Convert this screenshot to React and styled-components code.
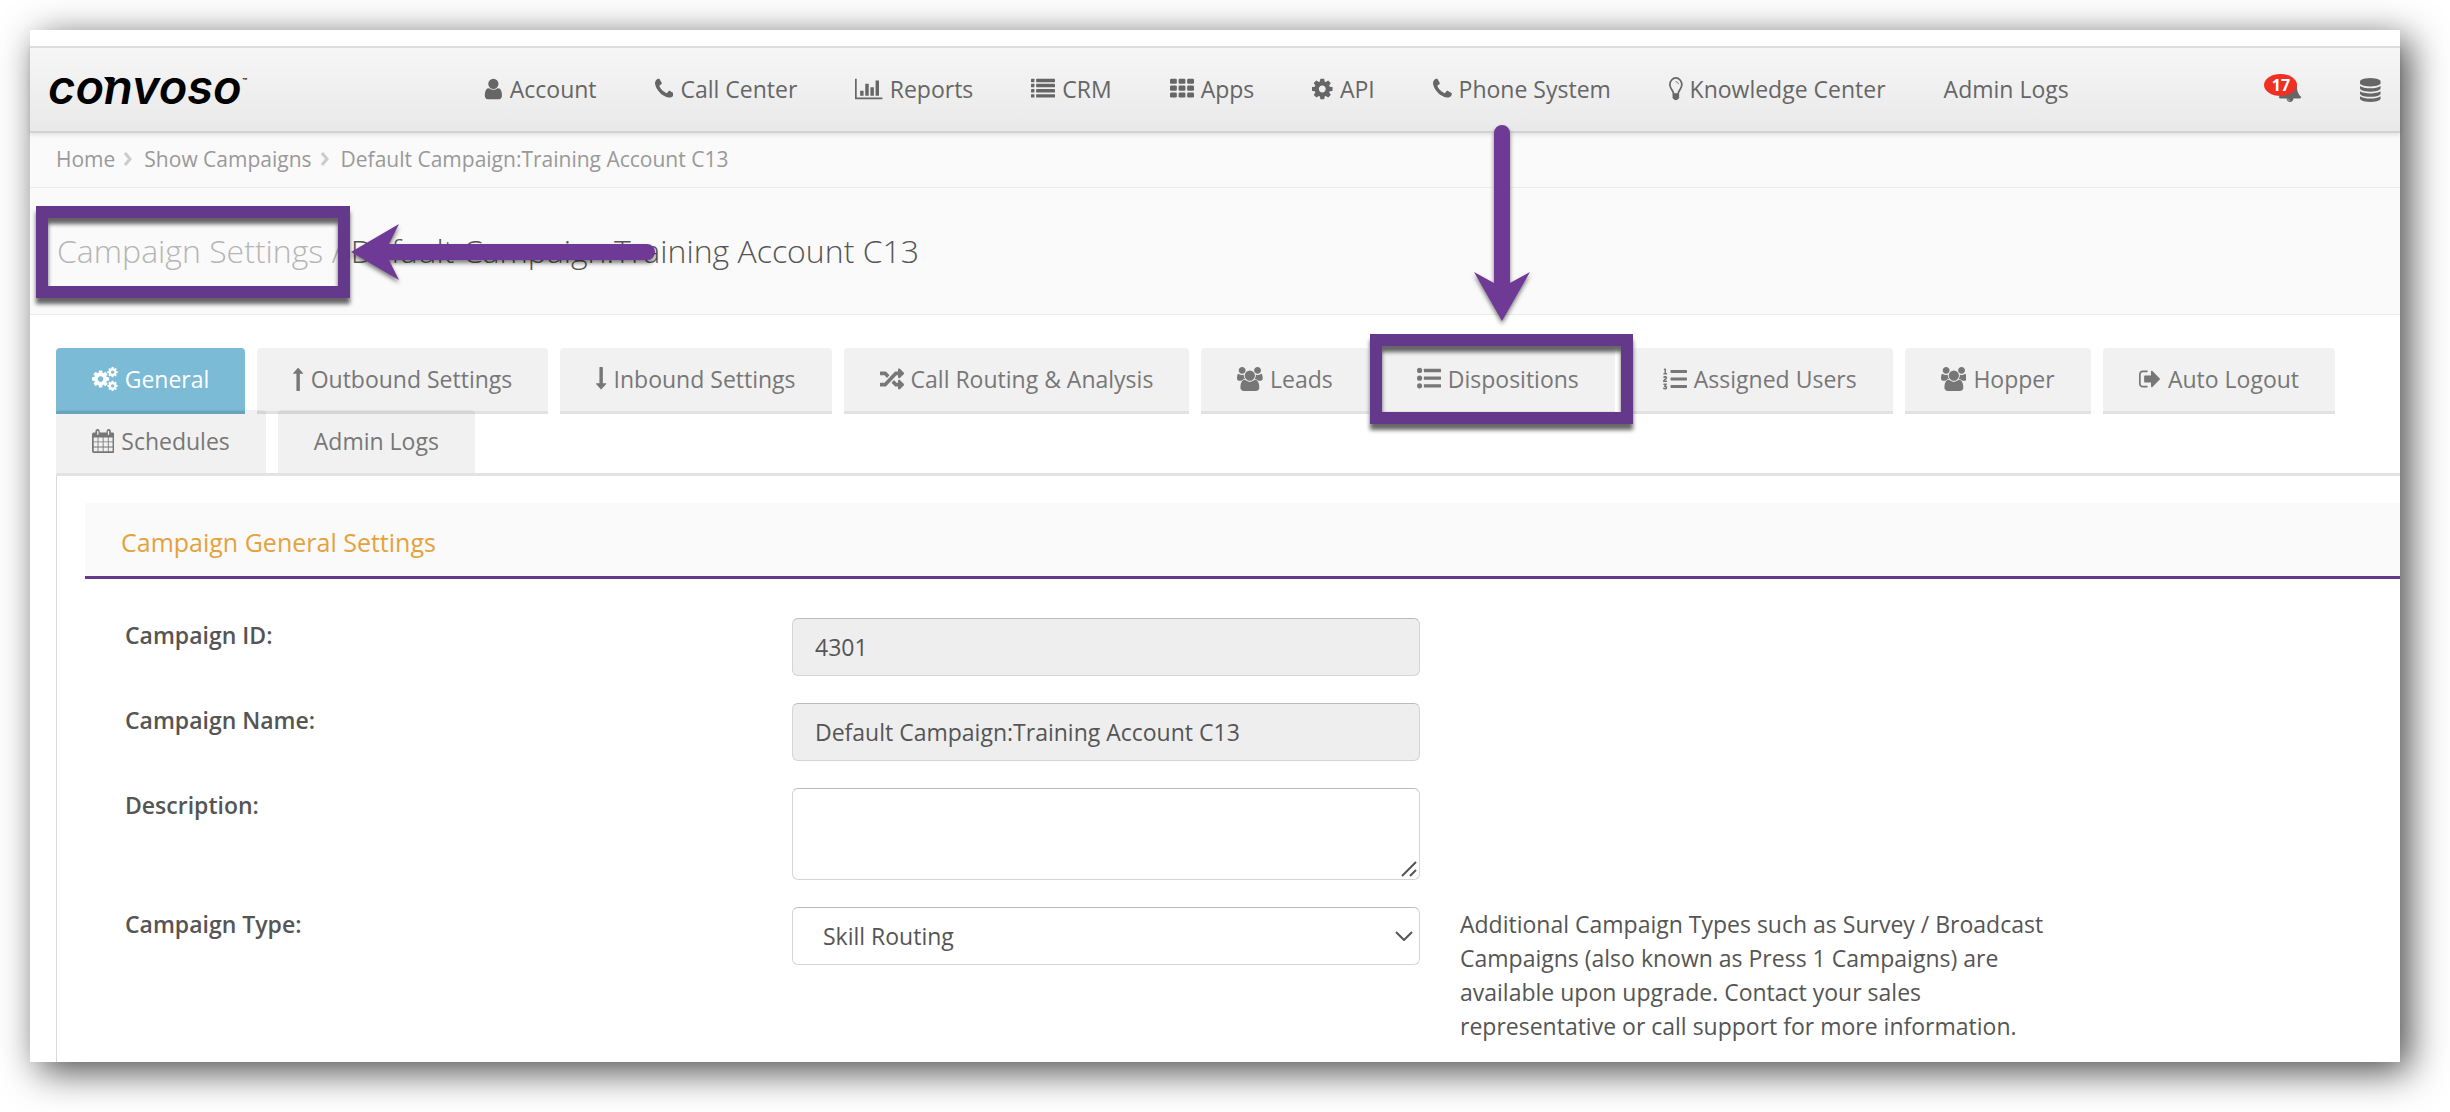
import React, { useState } from "react";
import styled, { createGlobalStyle } from "styled-components";
import { FaRandom, FaListOl } from "react-icons/fa";

const COG_PATH =
  "M1152 896q0-106-75-181t-181-75-181 75-75 181 75 181 181 75 181-75 75-181zm512-109v222q0 12-8 23t-20 13l-185 28q-19 54-39 91 35 50 107 138 10 12 10 25t-9 23q-27 37-99 108t-94 71q-12 0-26-9l-138-108q-44 23-91 38-16 136-29 186-7 28-36 28h-222q-14 0-24.5-8.5t-11.5-21.5l-28-184q-49-16-90-37l-141 107q-10 9-25 9-14 0-25-11-126-114-165-168-7-10-7-23 0-12 8-23 15-21 51-66.5t54-70.5q-27-50-41-99l-183-27q-13-2-21-12.5t-8-23.5v-222q0-12 8-23t19-13l186-28q14-46 39-92-40-57-107-138-10-12-10-24 0-10 9-23 26-36 98.5-107.5t94.5-71.5q13 0 26 10l138 107q44-23 91-38 16-136 29-186 7-28 36-28h222q14 0 24.5 8.5t11.5 21.5l28 184q49 16 90 37l142-107q9-9 24-9 13 0 25 10 129 119 165 170 7 8 7 22 0 12-8 23-15 21-51 66.5t-54 70.5q26 50 41 98l183 28q13 2 21 12.5t8 23.5z";

const UserIcon = () => (
  <Icon viewBox="196 0 1400 1792">
    <path d="M1536 1399q0 109-62.5 187t-150.5 78h-854q-88 0-150.5-78t-62.5-187q0-85 8.5-160.5t31.5-152 58.5-131 94-89 134.5-34.5q131 128 313 128t313-128q76 0 134.5 34.5t94 89 58.5 131 31.5 152 8.5 160.5zm-256-887q0 159-112.5 271.5t-271.5 112.5-271.5-112.5-112.5-271.5 112.5-271.5 271.5-112.5 271.5 112.5 112.5 271.5z" />
  </Icon>
);

const PhoneIcon = () => (
  <Icon viewBox="0 0 1408 1792">
    <path d="M1408 1240q0 27-10 70.5t-21 68.5q-21 50-122 106-94 51-186 51-27 0-53-3.5t-57.5-12.5-47-14.5-55.5-20.5-49-18q-98-35-175-83-127-79-264-216t-216-264q-48-77-83-175-3-9-18-49t-20.5-55.5-14.5-47-12.5-57.5-3.5-53q0-92 51-186 56-101 106-122 25-11 68.5-21t70.5-10q14 0 21 3 18 6 53 76 11 19 30 54t35 63.5 31 53.5q3 4 17.5 25t21.5 35.5 7 28.5q0 20-28.5 50t-62 55-62 53-28.5 46q0 9 5 22.5t8.5 20.5 14 24 11.5 19q76 137 174 235t235 174q2 1 19 11.5t24 14 20.5 8.5 22.5 5q18 0 46-28.5t53-62 55-62 50-28.5q14 0 28.5 7t35.5 21.5 25 17.5q25 15 53.5 31t63.5 35 54 30q70 35 76 53 3 7 3 21z" />
  </Icon>
);

const ChartIcon = () => (
  <Icon viewBox="0 0 2048 1792">
    <path d="M0 128h128v1408h1920v128H0zM384 1024h256v384H384zM768 512h256v896H768zM1152 768h256v640h-256zM1536 256h256v1152h-256z" />
  </Icon>
);

const ListIcon = () => (
  <Icon viewBox="0 0 1792 1792">
    {[128, 512, 896, 1280].map((y) => (
      <React.Fragment key={y}>
        <rect x="0" y={y} width="256" height="256" rx="32" />
        <rect x="384" y={y} width="1408" height="256" rx="32" />
      </React.Fragment>
    ))}
  </Icon>
);

const ThIcon = () => (
  <Icon viewBox="0 0 1792 1792">
    {[128, 640, 1152].map((y) =>
      [0, 640, 1280].map((x) => (
        <rect key={`${x}-${y}`} x={x} y={y} width="512" height="384" rx="96" />
      ))
    )}
  </Icon>
);

const CogIcon = () => (
  <Icon viewBox="128 0 1536 1792">
    <path d={COG_PATH} />
  </Icon>
);

const BulbIcon = () => (
  <Icon viewBox="0 0 1024 1792">
    <path
      fill="none"
      stroke="currentColor"
      strokeWidth="128"
      d="M345 1250C330 1020 64 880 64 560C64 320 270 64 512 64S960 320 960 560C960 880 694 1020 679 1250"
    />
    <path
      fill="none"
      stroke="currentColor"
      strokeWidth="64"
      strokeLinecap="round"
      d="M512 352C620 352 704 420 704 512"
    />
    <path d="M290 1216h444q34 0 34 60 0 40-20 68 20 28 20 64t-20 64q20 28 20 60 0 66-68 96-50 100-188 100t-188-100q-68-30-68-96 0-32 20-60-20-28-20-64t20-64q-20-28-20-68 0-60 34-60z" />
  </Icon>
);

const BellIcon = () => (
  <Icon viewBox="0 0 1792 1792">
    <path d="M912 1696q0-16-16-16-59 0-101.5-42.5t-42.5-101.5q0-16-16-16t-16 16q0 73 51.5 124.5t124.5 51.5q16 0 16-16zm816-288q0 52-38 90t-90 38h-448q0 106-75 181t-181 75-181-75-75-181h-448q-52 0-90-38t-38-90q50-42 91-88t85-119.5 74.5-158.5 50-206 19.5-260q0-152 117-282.5t307-158.5q-8-19-8-39 0-40 28-68t68-28 68 28 28 68q0 20-8 39 190 28 307 158.5t117 282.5q0 139 19.5 260t50 206 74.5 158.5 85 119.5 91 88z" />
  </Icon>
);

const DatabaseIcon = () => (
  <Icon viewBox="128 0 1536 1792">
    <path d="M896 768q237 0 443-43t325-127v170q0 69-103 128t-280 93.5-385 34.5-385-34.5-280-93.5-103-128v-170q119 84 325 127t443 43zm0 768q237 0 443-43t325-127v170q0 69-103 128t-280 93.5-385 34.5-385-34.5-280-93.5-103-128v-170q119 84 325 127t443 43zm0-384q237 0 443-43t325-127v170q0 69-103 128t-280 93.5-385 34.5-385-34.5-280-93.5-103-128v-170q119 84 325 127t443 43zm0-1152q208 0 385 34.5t280 93.5 103 128v128q0 69-103 128t-280 93.5-385 34.5-385-34.5-280-93.5-103-128v-128q0-69 103-128t280-93.5 385-34.5z" />
  </Icon>
);

const CogsIcon = () => (
  <Icon viewBox="0 0 1920 1792">
    <path transform="translate(-107 149) scale(0.833)" d={COG_PATH} />
    <path transform="translate(1088 -64) scale(0.5)" d={COG_PATH} />
    <path transform="translate(1088 960) scale(0.5)" d={COG_PATH} />
  </Icon>
);

const ArrowUpIcon = () => (
  <Icon viewBox="0 0 768 1792">
    <path d="M765 493q-9 19-29 19H512v1248q0 32-32 32H288q-32 0-32-32V512H32q-21 0-29-19t5-35L358 74q10-10 23-10 14 0 24 10l355 384q13 16 5 35z" />
  </Icon>
);

const ArrowDownIcon = () => (
  <Icon viewBox="0 0 768 1792">
    <path d="M765 1235q-9-19-29-19H512V32q0-32-32-32H288q-32 0-32 32v1184H32q-21 0-29 19t5 35l350 384q10 10 23 10 14 0 24-10l355-384q13-16 5-35z" />
  </Icon>
);

const GroupIcon = () => (
  <Icon viewBox="0 0 1920 1792">
    <path d="M593 896q-162 5-265 128h-134q-82 0-138-40.5t-56-118.5q0-353 124-353 6 0 43.5 21t97.5 42.5 119 21.5q67 0 133-23-5 37-5 66 0 139 81 256zm1071 637q0 120-73 189.5t-194 69.5h-874q-121 0-194-69.5t-73-189.5q0-53 3.5-103.5t14-109 26.5-108.5 43-97.5 62-81 85.5-53.5 111.5-20q10 0 43 21.5t73 48 107 48 135 21.5 135-21.5 107-48 73-48 43-21.5q61 0 111.5 20t85.5 53.5 62 81 43 97.5 26.5 108.5 14 109 3.5 103.5zm-1024-1277q0 106-75 181t-181 75-181-75-75-181 75-181 181-75 181 75 75 181zm704 384q0 159-112.5 271.5t-271.5 112.5-271.5-112.5-112.5-271.5 112.5-271.5 271.5-112.5 271.5 112.5 112.5 271.5zm576 225q0 78-56 118.5t-138 40.5h-134q-103-123-265-128 81-117 81-256 0-29-5-66 66 23 133 23 59 0 119-21.5t97.5-42.5 43.5-21q124 0 124 353zm-128-609q0 106-75 181t-181 75-181-75-75-181 75-181 181-75 181 75 75 181z" />
  </Icon>
);

const BulletsIcon = () => (
  <Icon viewBox="0 0 1792 1792">
    {[256, 832, 1408].map((y) => (
      <React.Fragment key={y}>
        <circle cx="192" cy={y} r="192" />
        <rect x="512" y={y - 128} width="1280" height="256" rx="32" />
      </React.Fragment>
    ))}
  </Icon>
);

const SignOutIcon = () => (
  <Icon viewBox="0 0 1664 1792">
    <path d="M640 1440q0 4 1 20t.5 26.5-3 23.5-10 19.5-20.5 6.5h-320q-119 0-203.5-84.5t-84.5-203.5v-704q0-119 84.5-203.5t203.5-84.5h320q13 0 22.5 9.5t9.5 22.5q0 4 1 20t.5 26.5-3 23.5-10 19.5-20.5 6.5h-320q-66 0-113 47t-47 113v704q0 66 47 113t113 47h312l11.5 1 11.5 3 8 5.5 7 9 2 13.5zm928-544q0 26-19 45l-544 544q-19 19-45 19t-45-19-19-45v-288h-448q-26 0-45-19t-19-45v-384q0-26 19-45t45-19h448v-288q0-26 19-45t45-19 45 19l544 544q19 19 19 45z" />
  </Icon>
);

const CalendarIcon = () => (
  <Icon viewBox="0 0 1664 1792">
    <path
      fillRule="evenodd"
      d="M128 256h128v-96q0-160 160-160t160 160v96h512v-96q0-160 160-160t160 160v96h128q128 0 128 128v1280q0 128-128 128H128Q0 1792 0 1664V384Q0 256 128 256zM128 640v288h288V640zM480 640v288h320V640zM864 640v288h320V640zM1248 640v288h288V640zM128 992v320h288V992zM480 992v320h320V992zM864 992v320h320V992zM1248 992v320h288V992zM128 1376v288h288v-288zM480 1376v288h320v-288zM864 1376v288h320v-288zM1248 1376v288h288v-288zM384 160v256q0 32 32 32t64-32V160q0-32-64-32-32 0-32 32zM1184 160v256q0 32 64 32 32 0 32-32V160q0-32-32-32-64 0-64 32z"
    />
  </Icon>
);

const navItems = [
  { label: "Account", icon: <UserIcon /> },
  { label: "Call Center", icon: <PhoneIcon /> },
  { label: "Reports", icon: <ChartIcon /> },
  { label: "CRM", icon: <ListIcon /> },
  { label: "Apps", icon: <ThIcon /> },
  { label: "API", icon: <CogIcon /> },
  { label: "Phone System", icon: <PhoneIcon /> },
  { label: "Knowledge Center", icon: <BulbIcon /> },
  { label: "Admin Logs" },
];

const tabs = [
  { label: "General", icon: <CogsIcon /> },
  { label: "Outbound Settings", icon: <ArrowUpIcon /> },
  { label: "Inbound Settings", icon: <ArrowDownIcon /> },
  { label: "Call Routing & Analysis", icon: <FaRandom size={24} /> },
  { label: "Leads", icon: <GroupIcon /> },
  { label: "Dispositions", icon: <BulletsIcon />, marked: true },
  { label: "Assigned Users", icon: <FaListOl size={24} /> },
  { label: "Hopper", icon: <GroupIcon /> },
  { label: "Auto Logout", icon: <SignOutIcon /> },
  { label: "Schedules", icon: <CalendarIcon /> },
  { label: "Admin Logs" },
];

const App = () => {
  const [activeTab, setActiveTab] = useState("General");
  const [description, setDescription] = useState("");

  return (
    <Page>
      <GlobalStyle />
      <Frame>
        <NavBar>
          <Logo href="#">
            convoso
            <LogoNotch viewBox="0 0 10 7">
              <path d="M0 0H10L5 7z" />
            </LogoNotch>
            <TradeMark>™</TradeMark>
          </Logo>
          <NavLinks>
            {navItems.map((item) => (
              <NavLink key={item.label} href="#">
                {item.icon}
                {item.label}
              </NavLink>
            ))}
          </NavLinks>
          <NavActions>
            <NavButton aria-label="Notifications">
              <BellIcon />
              <Badge>17</Badge>
            </NavButton>
            <NavButton aria-label="Data">
              <DatabaseIcon />
            </NavButton>
          </NavActions>
        </NavBar>

        <Breadcrumbs aria-label="Breadcrumb">
          <Crumb href="#">Home</Crumb>
          <CrumbArrow viewBox="0 0 8 14">
            <path d="M1 1L6 7L1 13" />
          </CrumbArrow>
          <Crumb href="#">Show Campaigns</Crumb>
          <CrumbArrow viewBox="0 0 8 14">
            <path d="M1 1L6 7L1 13" />
          </CrumbArrow>
          <Crumb href="#">Default Campaign:Training Account C13</Crumb>
        </Breadcrumbs>

        <TitleBar>
          <Title>
            <TitleLead>
              Campaign Settings
              <TitleMark />
              <LeftArrow viewBox="0 0 310 60">
                <path d="M2 29L50 1L40 21H298a8 8 0 0 1 0 16H40L50 57z" />
              </LeftArrow>
            </TitleLead>
            <TitleSlash> / </TitleSlash>
            Default Campaign:Training Account C13
          </Title>
        </TitleBar>

        <Content>
          <TabList role="tablist">
            {tabs.map((tab) => (
              <Tab
                key={tab.label}
                role="tab"
                aria-selected={tab.label === activeTab}
                $active={tab.label === activeTab}
                onClick={() => setActiveTab(tab.label)}
              >
                {tab.icon}
                {tab.label}
                {tab.marked && (
                  <>
                    <TabMark />
                    <DownArrow viewBox="0 0 60 200">
                      <path d="M30 197L2 148L22 159V9a8 8 0 0 1 16 0V159L58 148z" />
                    </DownArrow>
                  </>
                )}
              </Tab>
            ))}
          </TabList>

          <TabPanel role="tabpanel">
            <SectionTitle>Campaign General Settings</SectionTitle>
            <Form>
              <Label htmlFor="campaign-id">Campaign ID:</Label>
              <Input id="campaign-id" defaultValue="4301" readOnly />

              <Label htmlFor="campaign-name">Campaign Name:</Label>
              <Input
                id="campaign-name"
                defaultValue="Default Campaign:Training Account C13"
                readOnly
              />

              <Label htmlFor="description">Description:</Label>
              <FieldWrap>
                <TextArea
                  id="description"
                  value={description}
                  onChange={(e) => setDescription(e.target.value)}
                />
                <Grip viewBox="0 0 16 16">
                  <path d="M1 15L15 1M9 15L15 9" />
                </Grip>
              </FieldWrap>

              <Label htmlFor="campaign-type">Campaign Type:</Label>
              <FieldWrap>
                <Select id="campaign-type" defaultValue="Skill Routing">
                  <option>Skill Routing</option>
                </Select>
                <SelectArrow viewBox="0 0 18 10">
                  <path d="M1 1L9 9L17 1" />
                </SelectArrow>
              </FieldWrap>
              <Help>
                Additional Campaign Types such as Survey / Broadcast Campaigns
                (also known as Press 1 Campaigns) are available upon upgrade.
                Contact your sales representative or call support for more
                information.
              </Help>
            </Form>
          </TabPanel>
        </Content>
      </Frame>
    </Page>
  );
};

const GlobalStyle = createGlobalStyle`
  * {
    box-sizing: border-box;
  }

  body {
    margin: 0;
    background: #fff;
    font-family: "Open Sans", "Noto Sans", sans-serif;
    font-size: 23px;
    line-height: 34px;
    color: #555;
  }

  a {
    color: inherit;
    text-decoration: none;
  }

  button,
  input,
  select,
  textarea {
    font: inherit;
    color: inherit;
  }
`;

const Icon = styled.svg`
  height: 24px;
  flex-shrink: 0;
  fill: currentColor;
`;

const Page = styled.div`
  display: flex;
  min-height: 100vh;
  padding: 30px 50px 50px 30px;
`;

const Frame = styled.div`
  flex: 1;
  min-width: 0;
  padding-top: 16px;
  background: #fff;
  box-shadow: 9px 9px 36px rgba(0, 0, 0, 0.72);
`;

const NavBar = styled.header`
  position: relative;
  display: flex;
  align-items: center;
  height: 87px;
  border-top: 2px solid #dcdcdc;
  border-bottom: 2px solid #d2d2d2;
  background: linear-gradient(#f6f6f6, #e9e9e9);
  box-shadow: 0 2px 4px rgba(0, 0, 0, 0.1);
  color: #666;
`;

const Logo = styled.a`
  position: relative;
  flex: 0 0 425px;
  display: flex;
  padding: 0 0 6px 18px;
  font-family: Inter, sans-serif;
  font-size: 47px;
  font-style: italic;
  font-weight: 600;
  line-height: 52px;
  color: #000;
`;

const LogoNotch = styled.svg`
  position: absolute;
  top: 16px;
  left: 74px;
  width: 10px;
  height: 7px;
`;

const TradeMark = styled.span`
  font-size: 8px;
  line-height: 40px;
`;

const NavLinks = styled.nav`
  display: flex;
  padding-bottom: 2px;
`;

const NavLink = styled.a`
  display: flex;
  align-items: center;
  gap: 7px;
  padding: 0 29px;
  white-space: nowrap;
`;

const NavActions = styled.div`
  display: flex;
  gap: 58px;
  margin-left: auto;
  padding-right: 19px;
`;

const NavButton = styled.button`
  position: relative;
  display: flex;
  padding: 0;
  border: 0;
  background: none;
  cursor: pointer;
`;

const Badge = styled.span`
  position: absolute;
  top: -4px;
  left: -14px;
  width: 33px;
  border-radius: 50%;
  background: #ee3124;
  color: #fff;
  font-size: 16px;
  font-weight: 700;
  line-height: 22px;
  text-align: center;
`;

const Breadcrumbs = styled.nav`
  display: flex;
  align-items: center;
  height: 55px;
  padding: 0 0 2px 26px;
  border-bottom: 1px solid #ececec;
  background: #fafafa;
  color: #999;
  font-size: 21px;
`;

const Crumb = styled.a`
  white-space: nowrap;
`;

const CrumbArrow = styled.svg`
  width: 8px;
  height: 14px;
  margin: 0 12px 0 9px;
  fill: none;
  stroke: #ccc;
  stroke-width: 3;
`;

const TitleBar = styled.div`
  display: flex;
  align-items: center;
  height: 127px;
  padding-left: 27px;
  border-bottom: 1px solid #ececec;
  background: #fafafa;
`;

const Title = styled.h1`
  margin: 0;
  font-size: 32px;
  font-weight: 300;
  line-height: 44px;
  white-space: pre;
`;

const TitleLead = styled.span`
  position: relative;
  display: inline-block;
  color: #b5b5b5;
`;

const TitleSlash = styled.span`
  color: #b5b5b5;
`;

const Mark = styled.span`
  position: absolute;
  z-index: 2;
  border: 12px solid #64388a;
  filter: drop-shadow(0 6px 2px rgba(0, 0, 0, 0.6));
  pointer-events: none;
`;

const TitleMark = styled(Mark)`
  inset: -23px -27px -25px -21px;
`;

const TabMark = styled(Mark)`
  inset: -14px -18px -10px -11px;
`;

const Arrow = styled.svg`
  position: absolute;
  z-index: 2;
  fill: #6e3a96;
  filter: drop-shadow(0 3px 2px rgba(0, 0, 0, 0.5));
  pointer-events: none;
  overflow: visible;
`;

const LeftArrow = styled(Arrow)`
  top: -6px;
  left: 100%;
  width: 310px;
  height: 60px;
  margin-left: 26px;
`;

const DownArrow = styled(Arrow)`
  bottom: 100%;
  left: 50%;
  width: 60px;
  height: 200px;
  margin: 0 0 24px -26px;
`;

const Content = styled.main`
  padding: 33px 0 0 26px;
`;

const TabList = styled.div`
  position: relative;
  display: flex;
  flex-wrap: wrap;
  column-gap: 12px;
  padding-bottom: 4px;

  &::after {
    content: "";
    position: absolute;
    right: 0;
    bottom: 0;
    left: 0;
    height: 3px;
    background: #e3e3e3;
  }
`;

const Tab = styled.button`
  position: relative;
  display: flex;
  align-items: center;
  gap: 7px;
  height: 66px;
  margin-bottom: -4px;
  padding: 0 36px 4px;
  border: 0;
  border-radius: 4px 4px 0 0;
  background: ${({ $active }) => ($active ? "#7bbbd6" : "rgba(0, 0, 0, 0.055)")};
  box-shadow: inset 0 -3px
    ${({ $active }) => ($active ? "#6eaeca" : "rgba(0, 0, 0, 0.06)")};
  color: ${({ $active }) => ($active ? "#fff" : "#777")};
  white-space: nowrap;
  cursor: pointer;
`;

const TabPanel = styled.section`
  padding: 27px 0 19px 28px;
  border-left: 1px solid #d9d9d9;
`;

const SectionTitle = styled.h2`
  margin: 0;
  padding: 22px 36px 17px;
  border-bottom: 3px solid #64388a;
  background: #fafafa;
  color: #e5a23c;
  font-size: 25px;
  font-weight: 400;
`;

const Form = styled.form`
  display: grid;
  grid-template-columns: 627fr 628fr 940fr;
  gap: 27px 40px;
  align-items: start;
  padding: 39px 0 0 40px;
`;

const Label = styled.label`
  grid-column: 1;
  font-weight: 600;
`;

const Input = styled.input`
  width: 100%;
  height: 58px;
  padding: 0 22px;
  border: 1px solid #d5d5d5;
  border-top-color: #bbb;
  border-radius: 6px;
  background: #eee;
  outline: none;
`;

const FieldWrap = styled.div`
  position: relative;
  display: flex;
`;

const TextArea = styled.textarea`
  width: 100%;
  height: 92px;
  padding: 10px 22px;
  border: 1px solid #d5d5d5;
  border-top-color: #bbb;
  border-radius: 6px;
  background: #fff;
  outline: none;
  resize: none;
`;

const Grip = styled.svg`
  position: absolute;
  right: 3px;
  bottom: 3px;
  width: 16px;
  height: 16px;
  fill: none;
  stroke: #555;
  stroke-width: 2;
  pointer-events: none;
`;

const Select = styled.select`
  width: 100%;
  height: 58px;
  padding: 0 30px;
  border: 1px solid #d5d5d5;
  border-top-color: #bbb;
  border-radius: 6px;
  background: #fff;
  outline: none;
  appearance: none;
`;

const SelectArrow = styled.svg`
  position: absolute;
  top: 24px;
  right: 7px;
  width: 18px;
  height: 10px;
  fill: none;
  stroke: #555;
  stroke-width: 2;
  pointer-events: none;
`;

const Help = styled.p`
  grid-column: 3;
  max-width: 600px;
  margin: 0;
`;

export default App;
